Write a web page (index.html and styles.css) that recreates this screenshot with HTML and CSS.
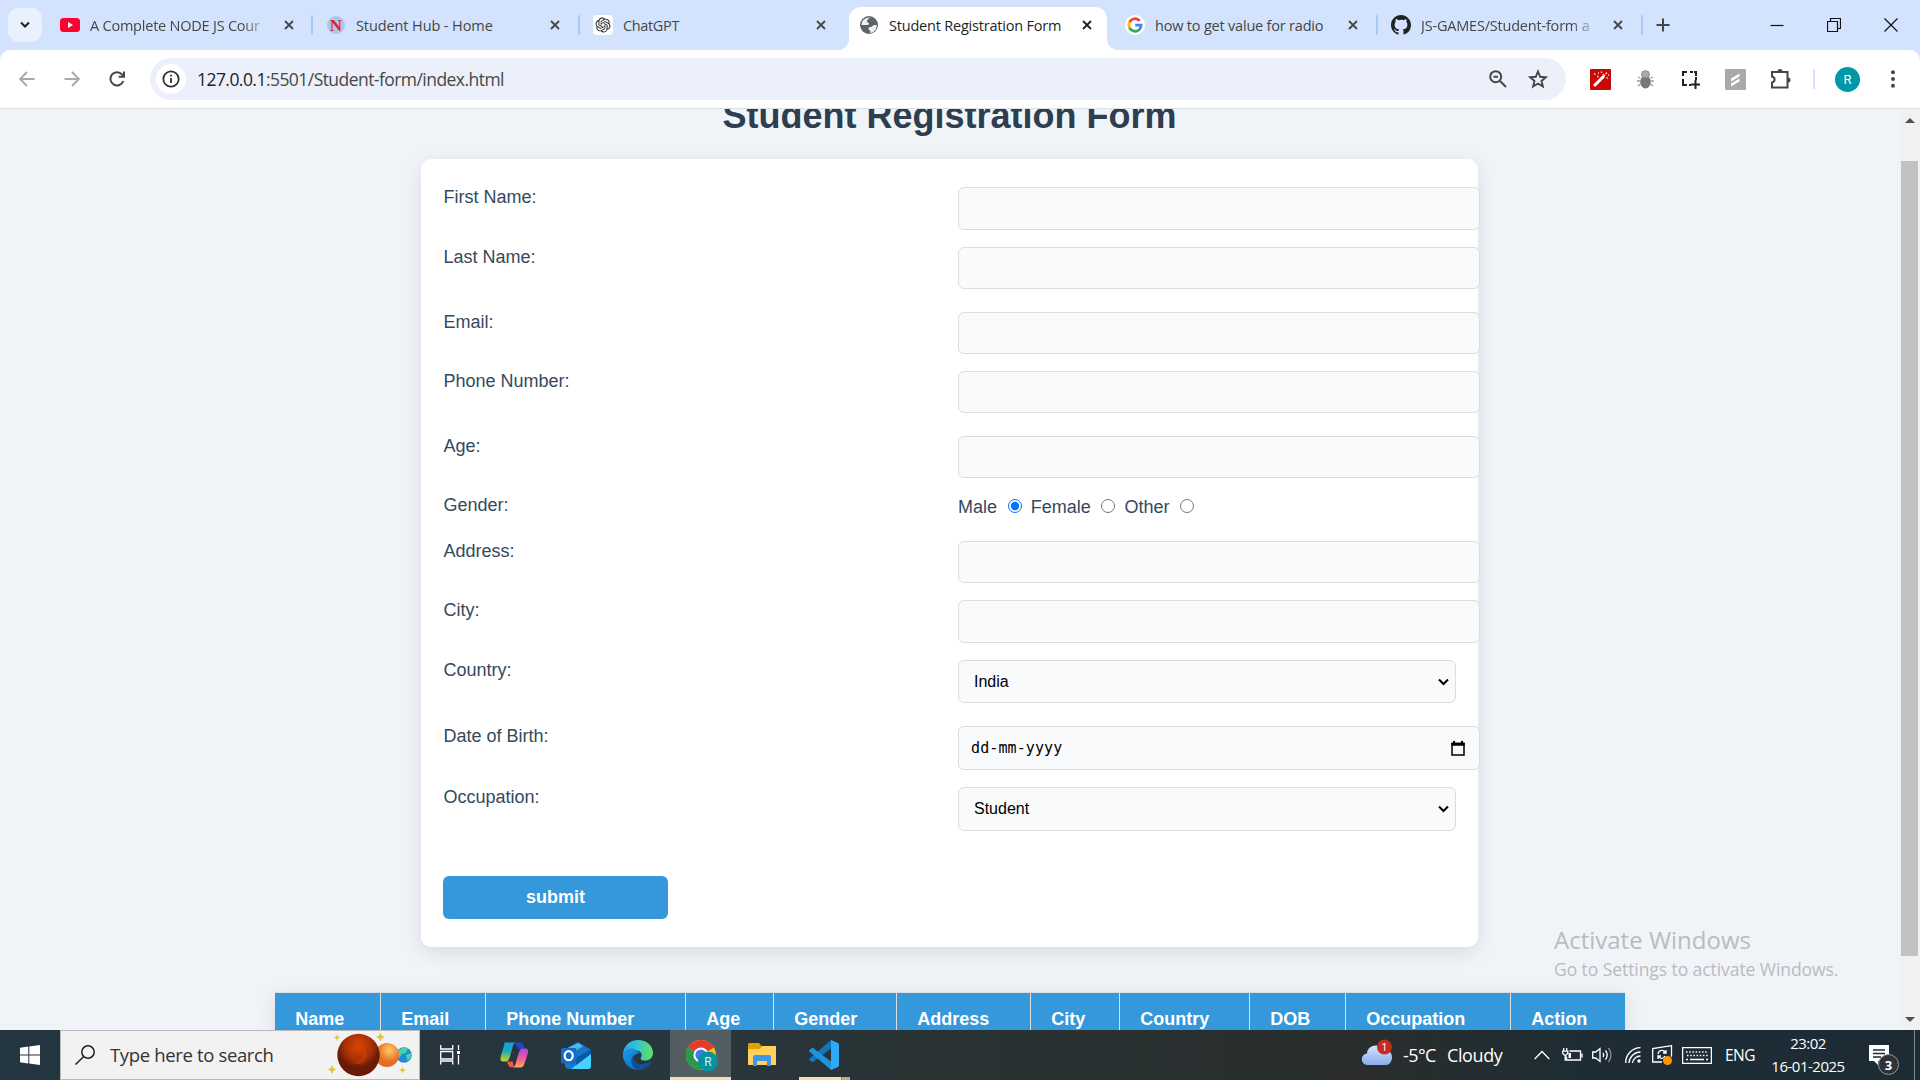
FILE: index.html
```html
<!DOCTYPE html>
<html lang="en">
<head>
<meta charset="utf-8">
<title>Student Registration Form</title>
<link rel="stylesheet" href="styles.css">
</head>
<body>
<div class="desktop">
  <header class="tabstrip">
    <button class="tab-search"><svg width="12" height="12" viewBox="0 0 12 12"><path d="M2 3.5l4 4 4-4" fill="none" stroke="#1f1f1f" stroke-width="2"/></svg></button>
    <div class="tab tab1">
      <svg class="fav" viewBox="0 0 20 20"><rect y="3" width="20" height="14" rx="3.5" fill="#f03"/><path d="M8 7l5 3-5 3z" fill="#fff"/></svg>
      <span class="tab-label fade t1">A Complete NODE JS Cour</span><svg class="close" viewBox="0 0 10 10"><path d="M1 1l8 8M9 1L1 9"/></svg>
    </div>
    <div class="tab tab2">
      <svg class="fav" viewBox="0 0 20 20"><circle cx="10" cy="10" r="9" fill="#a8cbea"/><text x="10" y="15.5" class="fav-n">N</text></svg>
      <span class="tab-label t2">Student Hub - Home</span><svg class="close" viewBox="0 0 10 10"><path d="M1 1l8 8M9 1L1 9"/></svg>
    </div>
    <div class="tab tab3">
      <svg class="fav" viewBox="0 0 20 20"><rect width="20" height="20" rx="4" fill="#fff"/><path transform="translate(2.5 2.5) scale(.625)" fill="#222" d="M22.2819 9.8211a5.9847 5.9847 0 0 0-.5157-4.9108 6.0462 6.0462 0 0 0-6.5098-2.9A6.0651 6.0651 0 0 0 4.9807 4.1818a5.9847 5.9847 0 0 0-3.9977 2.9 6.0462 6.0462 0 0 0 .7427 7.0966 5.98 5.98 0 0 0 .511 4.9107 6.051 6.051 0 0 0 6.5146 2.9001A5.9847 5.9847 0 0 0 13.2599 24a6.0557 6.0557 0 0 0 5.7718-4.2058 5.9894 5.9894 0 0 0 3.9977-2.9001 6.0557 6.0557 0 0 0-.7475-7.0729zm-9.022 12.6081a4.4755 4.4755 0 0 1-2.8764-1.0408l.1419-.0804 4.7783-2.7582a.7948.7948 0 0 0 .3927-.6813v-6.7369l2.02 1.1686a.071.071 0 0 1 .038.052v5.5826a4.504 4.504 0 0 1-4.4945 4.4944zm-9.6607-4.1254a4.4708 4.4708 0 0 1-.5346-3.0137l.142.0852 4.783 2.7582a.7712.7712 0 0 0 .7806 0l5.8428-3.3685v2.3324a.0804.0804 0 0 1-.0332.0615L9.74 19.9502a4.4992 4.4992 0 0 1-6.1408-1.6464zM2.3408 7.8956a4.485 4.485 0 0 1 2.3655-1.9728V11.6a.7664.7664 0 0 0 .3879.6765l5.8144 3.3543-2.0201 1.1685a.0757.0757 0 0 1-.071 0l-4.8303-2.7865A4.504 4.504 0 0 1 2.3408 7.872zm16.5963 3.8558L13.1038 8.364 15.1192 7.2a.0757.0757 0 0 1 .071 0l4.8303 2.7913a4.4944 4.4944 0 0 1-.6765 8.1042v-5.6772a.79.79 0 0 0-.407-.667zm2.0107-3.0231l-.142-.0852-4.7735-2.7818a.7759.7759 0 0 0-.7854 0L9.409 9.2297V6.8974a.0662.0662 0 0 1 .0284-.0615l4.8303-2.7866a4.4992 4.4992 0 0 1 6.6802 4.66zM8.3065 12.863l-2.02-1.1638a.0804.0804 0 0 1-.038-.0567V6.0742a4.4992 4.4992 0 0 1 7.3757-3.4537l-.142.0805L8.704 5.459a.7948.7948 0 0 0-.3927.6813zm1.0976-2.3654l2.602-1.4998 2.6069 1.4998v2.9994l-2.5974 1.4997-2.6067-1.4997Z"/></svg>
      <span class="tab-label t3">ChatGPT</span><svg class="close" viewBox="0 0 10 10"><path d="M1 1l8 8M9 1L1 9"/></svg>
    </div>
    <div class="tab active">
      <svg class="fav" viewBox="0 0 20 20"><circle cx="10" cy="10" r="9" fill="#5f6368"/><path d="M12 2.500c-3 1-4 2-4 4 0 1 1 1 2 1.500 0 2-1 2-2.500 2H2.500c0-4 3-8 9.500-7.500zM11 18c1-2 0-3-1.500-3.500 0-2 1-2.500 2.500-2.500s1.500-2 3.500-2h2.200c.3 4-2.700 8-6.700 8z" fill="#fff" opacity=".9"/></svg>
      <span class="tab-label t4">Student Registration Form</span><svg class="close" viewBox="0 0 10 10"><path d="M1 1l8 8M9 1L1 9"/></svg>
    </div>
    <div class="tab tab5">
      <svg class="fav" viewBox="0 0 20 20"><circle cx="10" cy="10" r="10" fill="#fff"/><g fill="none" stroke-width="2.700"><path d="M14.700 5.800A6.200 6.200 0 0 0 4.600 7" stroke="#ea4335"/><path d="M4.700 6.800a6.200 6.200 0 0 0 0 6.400" stroke="#fbbc04"/><path d="M4.600 13a6.200 6.200 0 0 0 9.600 1.700" stroke="#34a853"/><path d="M14 14.900a6.200 6.200 0 0 0 2.100-4.700H10.200" stroke="#4285f4"/></g></svg>
      <span class="tab-label t5">how to get value for radio</span><svg class="close" viewBox="0 0 10 10"><path d="M1 1l8 8M9 1L1 9"/></svg>
    </div>
    <div class="tab tab6">
      <svg class="fav" viewBox="0 0 16 16"><path fill="#1f2328" d="M8 0C3.580 0 0 3.580 0 8c0 3.540 2.290 6.530 5.470 7.590.4.070.55-.17.55-.38 0-.19-.01-.82-.01-1.490-2.010.37-2.530-.49-2.690-.94-.09-.23-.48-.94-.82-1.130-.28-.15-.68-.52-.01-.53.63-.01 1.080.58 1.230.82.72 1.210 1.870.87 2.330.66.07-.52.28-.87.51-1.070-1.780-.2-3.640-.89-3.640-3.950 0-.87.31-1.590.82-2.150-.08-.2-.36-1.020.08-2.120 0 0 .67-.21 2.200.82A7.600 7.600 0 0 1 8 3.870c.68 0 1.360.09 2 .27 1.530-1.040 2.200-.82 2.200-.82.44 1.100.16 1.920.08 2.120.51.56.82 1.270.82 2.150 0 3.070-1.870 3.750-3.650 3.950.29.25.54.73.54 1.480 0 1.070-.01 1.930-.01 2.200 0 .21.15.46.55.38A8 8 0 0 0 16 8c0-4.420-3.580-8-8-8z"/></svg>
      <span class="tab-label fade t6">JS-GAMES/Student-form a</span><svg class="close" viewBox="0 0 10 10"><path d="M1 1l8 8M9 1L1 9"/></svg>
    </div>
    <svg class="new-tab" width="14" height="14" viewBox="0 0 14 14"><path d="M7 .5v13M.5 7h13" stroke="#444746" stroke-width="2"/></svg>
    <div class="window-buttons">
      <svg width="14" height="14" viewBox="0 0 14 14"><path d="M.5 7.500h13"/></svg>
      <svg width="14" height="14" viewBox="0 0 14 14"><path d="M.5 3.500h10v10H.5zM3.500 3.500v-3h10v10h-3"/></svg>
      <svg width="14" height="14" viewBox="0 0 14 14"><path d="M.5.5l13 13M13.500.5L.5 13.500"/></svg>
    </div>
  </header>

  <nav class="toolbar-back"><div class="toolbar">
    <svg class="nav-ic" viewBox="0 0 16 16"><path d="M15.500 8H1.500M8 1L1.200 8 8 15" stroke="#aaa"/></svg>
    <svg class="nav-ic" viewBox="0 0 16 16"><path d="M.5 8h14M8 1l6.800 7L8 15" stroke="#aaa"/></svg>
    <svg class="nav-ic" viewBox="0 0 16 16"><path d="M14.300 10A6.600 6.600 0 1 1 13 3.400L15 5.500M15 .5v5.300H9.700" stroke="#444746" stroke-width="2"/></svg>
    <div class="omnibox">
      <span class="site-info"><svg width="18" height="18" viewBox="0 0 18 18"><circle cx="9" cy="9" r="7.700" fill="none" stroke="#333" stroke-width="1.800"/><path d="M9 8v5M9 4.800v1.800" stroke="#333" stroke-width="1.800"/></svg></span>
      <span class="url"><b>127.0.0.1</b>:5501/Student-form/index.html</span>
      <svg class="zoom-ic" width="18" height="18" viewBox="0 0 18 18"><g fill="none" stroke="#444746" stroke-width="2"><circle cx="6.700" cy="6.700" r="5.500"/><path d="M4.500 6.700h4.500M11 11l6 6"/></g></svg>
      <svg width="20" height="20" viewBox="0 0 20 20"><path d="M10 2.500l2.200 5.300 5.700.4-4.400 3.700 1.400 5.600L10 14.500l-4.900 3 1.400-5.600L2.100 8.200l5.700-.4z" fill="none" stroke="#444746" stroke-width="1.900"/></svg>
    </div>
    <div class="extensions">
      <svg viewBox="0 0 21 21"><rect width="21" height="21" rx="1" fill="#c90808"/><path d="M4 17L14 7" stroke="#fff" stroke-width="3"/><path d="M13 5l2 2M15.500 5l1.500-1.500M16.500 8.500l1.500.8M11.500 4V2.500M4 5h1.500M7 7.500h1.500M8 4h1M18 6h1" stroke="#ffdcdc" stroke-width="1.300"/></svg>
      <svg viewBox="0 0 21 21"><g stroke="#999" stroke-width="1.300" fill="none"><path d="M5.500 9L3 8M5 12H2M5.500 15L3 17M15.500 9L18 8M16 12h3M15.500 15l2.500 2"/></g><ellipse cx="10.500" cy="13" rx="5.300" ry="6.500" fill="#777"/><ellipse cx="10.500" cy="5.300" rx="4" ry="3.600" fill="#aaa" stroke="#888"/></svg>
      <svg viewBox="0 0 21 21"><path d="M3 7V3h4M10 3h3M16 7V3h-2M3 10v3M3 13v3h4M16 8v3M9 16h2M15.500 11v9M11 15.500h9" fill="none" stroke="#222" stroke-width="2"/></svg>
      <svg viewBox="0 0 21 21"><rect width="21" height="21" rx="1" fill="#a9a9a9"/><path d="M6 9.500l8.500-5v3l-8.500 5zM6 14.500l8.500-5v3l-8.500 5z" fill="#fff"/></svg>
      <svg viewBox="0 0 21 21"><path d="M2 3h15.500v15.500H2v-5c3.500-1 3.500-5 0-6z" fill="none" stroke="#444746" stroke-width="2"/><path d="M7.500 2.500a2.500 2.500 0 0 1 5 0zM18 8.500a2.500 2.500 0 0 1 0 5z" fill="#444746"/></svg>
    </div>
    <i class="tool-sep"></i>
    <span class="avatar">R</span>
    <svg class="dots" width="4" height="18" viewBox="0 0 4 18"><g fill="#444746"><circle cx="2" cy="2.200" r="2"/><circle cx="2" cy="9" r="2"/><circle cx="2" cy="15.800" r="2"/></g></svg>
  </div></nav>

  <div class="viewport">
    <main class="page">
      <h1 class="title">Student Registration Form</h1>
      <form class="card">
        <label>First Name:</label><input class="field" type="text">
        <label>Last Name:</label><input class="field" type="text">
        <label>Email:</label><input class="field" type="text">
        <label>Phone Number:</label><input class="field" type="text">
        <label>Age:</label><input class="field" type="text">
        <label>Gender:</label>
        <div class="radios">Male <input type="radio" name="gender" checked> Female <input type="radio" name="gender"> Other <input type="radio" name="gender"></div>
        <label>Address:</label><input class="field" type="text">
        <label>City:</label><input class="field tall" type="text">
        <label>Country:</label>
        <div class="select tall">India<svg width="11" height="8" viewBox="0 0 11 8"><path d="M1 1.500l4.500 4.500L10 1.500" fill="none" stroke="#000" stroke-width="2"/></svg></div>
        <label>Date of Birth:</label>
        <div class="date">dd-mm-yyyy<svg width="14" height="15" viewBox="0 0 14 15"><path d="M1 2.500h12v11.500H1z" fill="none" stroke="#000" stroke-width="1.500"/><path d="M.3 1.800h13.400v3H.3zM2 0h2v2H2zM10 0h2v2h-2z"/></svg></div>
        <label>Occupation:</label>
        <div class="select taller">Student<svg width="11" height="8" viewBox="0 0 11 8"><path d="M1 1.500l4.500 4.500L10 1.500" fill="none" stroke="#000" stroke-width="2"/></svg></div>
        <button class="submit" type="button">submit</button>
      </form>
      <div class="records">
        <span>Name</span><span>Email</span><span>Phone Number</span><span>Age</span><span>Gender</span><span>Address</span><span>City</span><span>Country</span><span>DOB</span><span>Occupation</span><span>Action</span>
      </div>
    </main>
    <aside class="scrollbar">
      <svg width="10" height="5" viewBox="0 0 10 5"><path d="M0 5l5-5 5 5z" fill="#505050"/></svg>
      <i class="thumb"></i>
      <svg width="10" height="5" viewBox="0 0 10 5"><path d="M0 0l5 5 5-5z" fill="#505050"/></svg>
    </aside>
    <div class="watermark"><p class="wm-title">Activate Windows</p><p class="wm-sub">Go to Settings to activate Windows.</p></div>
  </div>

  <footer class="taskbar">
    <div class="start"><svg width="20" height="20" viewBox="0 0 20 20"><path d="M0 2.800L8.300 1.600v8H0zM9.300 1.500L20 0v9.600H9.300zM0 10.500h8.300v8L0 17.300zM9.300 10.500H20V20L9.300 18.500z" fill="#fff"/></svg></div>
    <div class="search">
      <svg width="20" height="20" viewBox="0 0 20 20"><g fill="none" stroke="#222" stroke-width="1.500"><circle cx="13" cy="7" r="6.200"/><path d="M8.700 11.500L.5 19.500"/></g></svg>
      <span>Type here to search</span>
      <svg class="planets" width="92" height="48" viewBox="0 0 92 48">
        <defs><radialGradient id="mars" cx=".5" cy=".3"><stop offset="0" stop-color="#dc4605"/><stop offset=".65" stop-color="#a63008"/><stop offset="1" stop-color="#681a05"/></radialGradient><radialGradient id="venus" cx=".6" cy=".3"><stop offset="0" stop-color="#ffcb68"/><stop offset="1" stop-color="#e56c21"/></radialGradient></defs>
        <circle cx="76" cy="24" r="7.800" fill="#218be0"/><path d="M71 19l5-3 4 1-2 5-4 1-3 4-3-4zM78 24l5-2 .5 4-4 4z" fill="#49d49c"/>
        <circle cx="59" cy="24" r="12" fill="url(#venus)"/><circle cx="30.500" cy="24" r="21.200" fill="url(#mars)"/><path d="M27 4c-2 13 14 9 12 21-2 8-9 9-14 7 10-1 13-11 6-15-5-3-8-8-4-13z" fill="#d04006" opacity=".5"/>
        <path d="M9 3l1 2.500 2.500 1-2.500 1-1 2.500-1-2.500-2.500-1 2.500-1zM52.300 1.500l1.500 3 3 1.500-3 1.500-1.500 3-1.500-3-3-1.500 3-1.500zM4 34l1.500 3 3 1.500-3 1.500L4 43l-1.500-3-2.500-1.500 2.500-1.500zM74.500 35.500l1 2.500 2.500 1-2.500 1-1 2.500-1-2.500-2.500-1 2.500-1z" fill="#ebc33d"/>
      </svg>
    </div>
    <div class="task task-view"><svg width="20" height="20" viewBox="0 0 20 20"><path d="M.7 0v4h12V0M.7 19.500v-3.500h12v3.500M.7 6.500h12v7.500H.7zM18.500 0v5M18.500 10v9.500" fill="none" stroke="#fff" stroke-width="1.300"/><path d="M17 6h3v3h-3z" fill="#fff"/></svg></div>
    <div class="task"><svg width="30" height="30" viewBox="0 0 30 30">
      <defs><linearGradient id="cpA" x1="0" y1="0" x2="0" y2="1"><stop offset="0" stop-color="#199be8"/><stop offset=".45" stop-color="#19a9bf"/><stop offset=".8" stop-color="#8fc846"/><stop offset="1" stop-color="#f2c12f"/></linearGradient><linearGradient id="cpB" x1="0" y1="0" x2="0" y2="1"><stop offset="0" stop-color="#a34fe0"/><stop offset=".5" stop-color="#ef569b"/><stop offset="1" stop-color="#ffa95a"/></linearGradient></defs>
      <path d="M16 2.500h5c2 0 3 1.500 3.500 3l1 3-6 .5z" fill="#1c49cf"/><path d="M5 2.500h12c-3 0-3.500 3-4.500 7l-2 7c-1 3-2 5-4.500 5H3.500C1 21.500.5 19 1.200 16.500l3-10c.7-2 1-4 .8-4z" transform="translate(.5)" fill="url(#cpA)"/><path d="M25 27.500H13c3 0 3.500-3 4.500-7l2-7c1-3 2-5 4.500-5h2.500c2.500 0 3 2.500 2.300 5l-3 9c-.7 2.500-1.500 5-4.300 5z" fill="url(#cpB)"/><path d="M8 21.500h5.500l1.500 5c-4 2-5.500-.5-6-2.500z" fill="#f15a4a"/></svg></div>
    <div class="task"><svg width="30" height="27" viewBox="0 0 30 27"><path d="M4 7L17 0l13 8v16c0 1.500-1 3-3 3H9c-3 0-5-1-5-4z" fill="#1378c8"/><path d="M5 7l12-6 5 3L9 13z" fill="#50b7ee"/><path d="M15 16L30 7v7L15 24z" fill="#0a59a9"/><path d="M30 12v12c0 1.500-1 3-3 3H10z" fill="#46d2fa"/><rect y="6" width="15.500" height="15.500" rx="1.500" fill="#126bcb"/><ellipse cx="7.700" cy="13.700" rx="4" ry="4.500" fill="none" stroke="#fff" stroke-width="2.300"/></svg></div>
    <div class="task"><svg width="30" height="30" viewBox="0 0 30 30"><defs><linearGradient id="edA"><stop offset="0" stop-color="#2ba5e8"/><stop offset=".5" stop-color="#32c6cc"/><stop offset="1" stop-color="#62e35a"/></linearGradient><linearGradient id="edB" x1="0" y1="0" x2="1" y2="1"><stop offset="0" stop-color="#189cec"/><stop offset="1" stop-color="#0b62c1"/></linearGradient></defs><path d="M0 14C1 5 7 0 15 0c9 0 15 6 15 13 0 5-4 7.500-8 7.500-4 0-5-1.500-4-3 2-4-1-7-5-7C6 10.500 1 14 0 20z" fill="url(#edA)"/><path d="M0 14c2-5 7-7 11-5 3 1 5 3 6 5-5-2-7 3-6 6 1 5 6 7 10 6.500-3 3.500-6 3.500-8 3.200C5 29 0 22 0 14z" fill="url(#edB)"/><path d="M11.500 14.500c-3 7 4 12.500 15 7.500 1-.5 2 .3 1.200 1.300C24 29 18 30.500 14 29.700 8 27 6 18 11.500 14.500z" fill="#124f99"/></svg></div>
    <div class="task current"><svg width="34" height="34" viewBox="0 0 34 34"><circle cx="15" cy="17" r="15" fill="#fbbc16"/><path d="M15 17L2 9.500a15 15 0 0 1 26 0z" fill="#e33b2e"/><path d="M15 17l-13-7.500A15 15 0 0 0 15 32l7-11z" fill="#259b4b"/><circle cx="15" cy="17" r="7.600" fill="#fff"/><circle cx="15" cy="17" r="5.600" fill="#3e7de8"/><circle cx="22" cy="23.500" r="10" fill="#06929f"/><text x="22" y="27.500" class="chrome-r">R</text></svg></div>
    <div class="task"><svg width="28" height="24" viewBox="0 0 28 24"><path d="M0 1.500Q0 0 1.500 0H11l2.500 3H28v6H0z" fill="#dfa000"/><path d="M0 6h12l2.500-3H28v19H0z" fill="#ffd35b"/><path d="M5 23V14q0-2 2-2h14q2 0 2 2v9h-4v-5H9v5z" fill="#3d99e8"/></svg></div>
    <div class="task code"><svg width="30" height="30" viewBox="0 0 30 30"><path d="M22 0v8.500L3.500 22.500.5 20q-.8-.8 0-1.500z" fill="#1176b8"/><path d="M22 30v-8.500L3.500 7.500.5 10q-.8.800 0 1.500z" fill="#1f93dd"/><path d="M22 0l7 3q1 .5 1 1.500v21q0 1-1 1.500l-7 3z" fill="#2fa9f5"/></svg></div>

    <div class="tray">
      <svg class="weather" width="32" height="28" viewBox="0 0 32 28"><defs><linearGradient id="cl" x1="0" y1="0" x2="0" y2="1"><stop offset="0" stop-color="#d4e3ff"/><stop offset="1" stop-color="#89ace9"/></linearGradient></defs><path d="M6 27a5.700 5.700 0 0 1-1-11.500A8.500 8.500 0 0 1 21 12c6-1 9 3 9 7.500S27 27 24 27z" fill="url(#cl)"/><circle cx="22.500" cy="9" r="7.500" fill="#c42b1c"/><text x="22.500" y="13" class="weather-n">1</text></svg>
      <span class="temp">-5°C</span><span class="sky">Cloudy</span>
      <svg class="t-chev" width="16" height="10" viewBox="0 0 16 10"><path d="M.7 9L8 1.500 15.300 9"/></svg>
      <svg class="t-bat" width="21" height="14" viewBox="0 0 21 14"><path d="M7.500 3h11v9H4.500V8.500M20 5.500v4M1.700 0v3M4.700 0v3M.6 3.200h5.200v2L4 7.200H2.400L.6 5.200zM3.200 7v5h1.500"/><path d="M6.500 5h2.500v5H6.500z" fill="#fff" stroke="none"/></svg>
      <svg class="t-vol" width="21" height="18" viewBox="0 0 21 18"><path d="M.7 6h3L8 2.500v13L3.700 12h-3zM11 7q1.500 2 0 4M13.500 4.500q3.500 4.500 0 9"/><path d="M16.500 2q5 7 0 14" opacity=".45"/></svg>
      <svg class="t-wifi" width="16" height="16" viewBox="0 0 16 16"><path d="M.7 16A15 15 0 0 1 15.500.7M4 16A11.500 11.500 0 0 1 15.500 5M7.500 16a8 8 0 0 1 8-7"/><circle cx="14" cy="14" r="1.700" fill="#fff" stroke="none"/></svg>
      <svg class="t-sync" width="21" height="20" viewBox="0 0 21 20"><path d="M10 17H.7V3.500L19.500.7v11M6 9q1-4 4.500-3.500 2 .2 3 2M14 5v3h-3M13 11q-1 2.500-3.500 2.300-2-.2-3-2M6 14v-3h3"/><circle cx="15.500" cy="15.500" r="4.500" fill="#ff9800" stroke="none"/></svg>
      <svg class="t-key" width="30" height="17" viewBox="0 0 30 17"><path d="M.6.6h28.800v15.800H.6z"/><path d="M4 5h22M5 8.500h21" stroke-dasharray="1.500 1.700"/><path d="M4 12.500h2M8 12.500h14M24 12.500h2"/></svg>
      <span class="lang">ENG</span>
      <div class="clock"><span>23:02</span><span>16-01-2025</span></div>
      <svg class="t-note" width="31" height="32" viewBox="0 0 31 32"><path d="M0 0h20v16H9v4l-4-4H0z" fill="#fff" stroke="none"/><path d="M4 5h12M4 8.500h12M4 12h8" stroke="#1d2a32"/><circle cx="19.500" cy="19.500" r="10" fill="#303437" stroke="#999" stroke-width="1"/><text x="19.500" y="24.500" class="note-n">3</text></svg>
      <i class="show-desktop"></i>
    </div>
  </footer>
</div>
</body>
</html>
```
FILE: styles.css
```css
* { box-sizing: border-box; }
body { margin: 0; overflow: hidden; font-family: "Liberation Sans", Arial, sans-serif; }
svg { flex: none; display: block; }
.desktop { width: 1920px; height: 1080px; display: flex; flex-direction: column; overflow: hidden; }

.tabstrip { flex: none; height: 50px; background: #d3e3fd; display: flex; align-items: center; padding-left: 8px; font-family: "Open Sans", sans-serif; }
.tab-search { width: 34px; height: 34px; border: 0; border-radius: 11px; background: #eaf1fe; display: grid; place-items: center; padding: 0; margin-right: 4px; }
.tab { position: relative; height: 50px; width: 267px; padding: 0 19px 0 14px; display: flex; align-items: center; font-size: 14.5px; color: #444746; }
.tab1 { width: 266px; padding-right: 18px; }
.tab::after { content: ""; position: absolute; right: -1px; top: 15px; width: 2px; height: 20px; background: #a8c7fa; border-radius: 1px; }
.fav { width: 20px; height: 20px; margin-right: 10px; }
.fav-n { font: bold 17px "Liberation Serif", serif; fill: #e0222d; text-anchor: middle; }
.tab-label { flex: 1; min-width: 0; white-space: nowrap; margin-right: 10px; padding-top: 2px; line-height: 24px; }
.fade { -webkit-mask-image: linear-gradient(90deg, #000 calc(100% - 32px), transparent calc(100% - 4px)); mask-image: linear-gradient(90deg, #000 calc(100% - 32px), transparent calc(100% - 4px)); }
.close { width: 10px; height: 10px; stroke: #444746; stroke-width: 1.800; fill: none; }
.tab3 { width: 270px; padding-right: 23px; }
.tab3::after, .active::after { display: none; }
.active { width: 258px; height: 43px; align-self: flex-end; background: #fff; border-radius: 12px 12px 0 0; padding: 0 15px 7px 10px; color: #1f1f1f; }
.active .close { stroke: #1f1f1f; }
.active::before { content: ""; position: absolute; left: -12px; right: -12px; bottom: 0; height: 12px; background: radial-gradient(circle at 0 0, transparent 12px, #fff 12.500px) left / 12px 12px no-repeat, radial-gradient(circle at 100% 0, transparent 12px, #fff 12.500px) right / 12px 12px no-repeat; }
.tab5 { width: 270px; padding-left: 18px; }
.tab6 { width: 265px; }
.t1 { letter-spacing: -0.22px; }
.t2 { letter-spacing: -0.1px; }
.t3 { letter-spacing: -0.35px; }
.t4, .t5, .t6 { letter-spacing: -0.2px; }
.new-tab { margin-left: 14px; }
.window-buttons { margin-left: auto; padding-right: 22px; display: flex; gap: 43px; }
.window-buttons svg { fill: none; stroke: #111; stroke-width: 1.200; }

.toolbar-back { flex: none; background: #d3e3fd; height: 59px; }
.toolbar { height: 59px; background: #fff; border-bottom: 1px solid #dedfdf; border-radius: 10px 10px 0 0; padding: 0 25px 0 19px; display: flex; align-items: center; }
.nav-ic { width: 16px; height: 16px; fill: none; stroke-width: 1.900; margin-right: 29px; }
.nav-ic:nth-child(3) { margin-right: 25px; }
.omnibox { width: 1416px; height: 42px; border-radius: 21px; background: #ebf0fa; padding: 0 18px 0 6px; display: flex; align-items: center; }
.site-info { width: 30px; height: 30px; border-radius: 50%; background: #fff; display: grid; place-items: center; }
.url { margin-left: 11px; font: 17.500px "Open Sans", sans-serif; letter-spacing: -0.55px; color: #474747; }
.url b { font-weight: 400; color: #1f1f1f; }
.zoom-ic { margin-left: auto; margin-right: 21px; }
.extensions { display: flex; gap: 24px; margin-left: 24px; }
.extensions svg { width: 21px; height: 21px; }
.tool-sep { width: 2px; height: 20px; background: #d3e3fd; margin-left: 22px; }
.avatar { width: 25px; height: 25px; border-radius: 50%; background: #0097a7; color: #fff; font: 13px/25px Roboto, sans-serif; text-align: center; margin-left: 20px; }
.dots { margin-left: auto; }

.viewport { position: relative; flex: none; height: 921px; display: flex; background: #f0f4f8; }
.page { width: 1899px; height: 921px; overflow: hidden; display: flex; flex-direction: column; align-items: center; color: #34495e; font-size: 18px; }
.title { margin: -14px 0 22px; height: 42px; font-size: 36px; line-height: 42px; color: #2c3e50; white-space: nowrap; flex: none; }
.card { flex: none; width: 1057px; height: 788px; background: #fff; border-radius: 10px; box-shadow: 0 5px 19px rgba(0, 0, 0, .1); padding: 28px 22px; display: grid; grid-template-columns: 515px 498px; grid-template-rows: 60px 65px 59px 65px 59px 46px 59px 60px 66px 61px 89px 43px; align-items: start; line-height: 21px; }
.card label { padding-left: .5px; }
.field, .select, .date { border: 1px solid #ddd; border-radius: 6px; background: #f9fafc; color: #111; }
.field { width: 522px; height: 42px; padding: 0 12px; margin: 0; }
.field:first-of-type, .tall { height: 43px; }
.taller { height: 44px; padding-bottom: 1px; }
.select { width: 498px; padding-left: 15px; padding-right: 6px; display: flex; align-items: center; justify-content: space-between; font-size: 16px; color: #000; }
.date { width: 522px; height: 44px; padding: 0 14px 0 12px; display: flex; align-items: center; justify-content: space-between; font: 15px "DejaVu Sans Mono", monospace; letter-spacing: .1px; color: #000; }
.radios { display: flex; align-items: center; padding-top: 2px; }
.radios input { width: 14px; height: 14px; margin: 0 9px 3px 10.700px; }
.submit { width: 225px; height: 43px; border: 0; border-radius: 6px; background: #3498db; color: #fff; font: bold 18px "Liberation Sans", Arial, sans-serif; padding: 0 0 1px; }
.records { flex: none; margin-top: 45px; width: 1350px; height: 60px; border-top: 1px solid #ddd; background: #3498db; display: grid; grid-template-columns: 106px 105px 200px 88px 123px 134px 89px 130px 96px 165px 114px; color: #fff; font-weight: 700; box-shadow: 0 5px 19px rgba(0, 0, 0, .1); }
.records span { padding: 16px 0 0 20.700px; line-height: 21px; border-right: 1px solid #ddd; white-space: nowrap; }
.records span:last-child { border: 0; }

.scrollbar { width: 21px; height: 921px; background: #f1f1f1; display: flex; flex-direction: column; align-items: center; padding: 9px 0 8px; }
.thumb { width: 17px; height: 795px; margin: 38px 0 auto; background: #c1c1c1; }
.watermark { position: absolute; left: 1554px; top: 813px; font-family: "Open Sans", sans-serif; color: #b9bbbe; white-space: nowrap; }
.watermark p { margin: 0; }
.wm-title { font-size: 24px; line-height: 35px; letter-spacing: 0; }
.wm-sub { font-size: 17.500px; line-height: 24px; letter-spacing: -0.07px; }

.taskbar { flex: none; height: 50px; display: flex; align-items: center; background: linear-gradient(90deg, #23353f, #28363d 35%, #293334 48%, #292d2d 72%, #1e2d35 82%, #1c2b34); color: #fff; font-family: "Open Sans", sans-serif; }
.start { width: 60px; display: grid; place-items: center; }
.search { width: 360px; height: 50px; background: #f2f2f2; border: 1px solid #b9b9b9; display: flex; align-items: center; padding: 0 0 0 14px; font-size: 18.500px; color: #333; }
.search span { margin-left: 15px; letter-spacing: -0.35px; white-space: nowrap; }
.search span, .temp, .sky { margin-top: -1px; }
.planets { margin-left: auto; margin-right: -1px; }
.task { width: 62px; height: 50px; display: grid; place-items: center; }
.task-view { width: 63px; padding-right: 3px; }
.current { width: 61px; margin-left: 1px; background: #535e63; border-bottom: 3px solid #ffd9ac; padding: 3px 0 0 4px; }
.chrome-r { font: 12px Roboto, sans-serif; fill: #d9eeee; text-anchor: middle; }
.code { width: 51px; margin-left: 6px; padding: 3px 1px 0 0; border-image: linear-gradient(90deg, #ffd9ac 40px, #958269 40px, #958269 41px, #c1ab8c 41px) 3; border-width: 0 0 3px; border-style: solid; }
.tray { margin-left: auto; height: 50px; display: flex; align-items: center; font-size: 18px; }
.tray svg { fill: none; stroke: #fff; stroke-width: 1.300; }
.tray .weather { stroke: none; margin-bottom: 7px; }
.tray .weather-n { font: 11px "Open Sans", sans-serif; fill: #fff; text-anchor: middle; }
.tray span { white-space: nowrap; }
.temp { width: 44px; margin-left: 9px; letter-spacing: -0.6px; }
.sky { width: 87px; letter-spacing: -0.4px; }
.tray .t-chev { margin-right: 12px; }
.tray .t-bat { margin-right: 9px; }
.tray .t-vol { margin-right: 12px; }
.tray .t-wifi { margin-right: 11px; }
.tray .t-sync { margin-right: 9px; }
.lang { width: 46px; margin-left: 13px; font-size: 15.500px; letter-spacing: -0.5px; }
.clock { width: 74px; display: flex; flex-direction: column; align-items: center; font-size: 15px; line-height: 23px; letter-spacing: -0.5px; }
.tray .t-note { margin: 12px 14px 0 24px; }
.note-n { font: bold 13px "Open Sans", sans-serif; fill: #fff; stroke: none; text-anchor: middle; }
.show-desktop { width: 1px; height: 50px; background: #81898d; margin-right: 5px; }
```
